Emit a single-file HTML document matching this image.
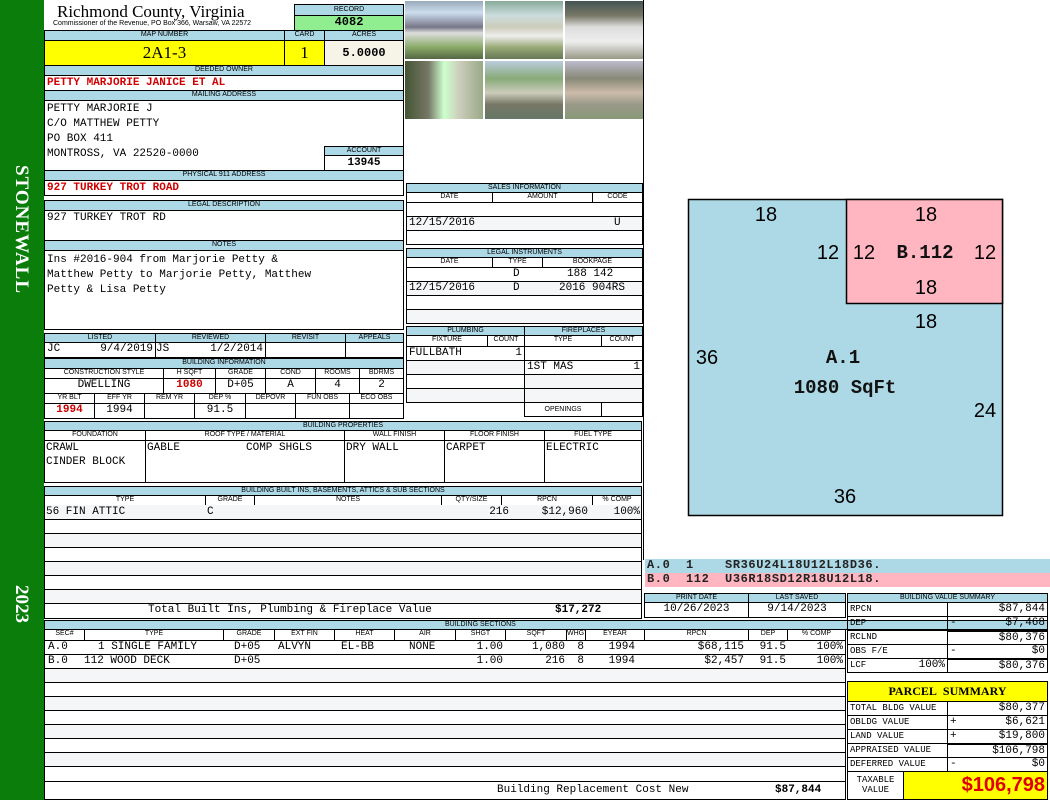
<!DOCTYPE html>
<html><head><meta charset="utf-8"><style>
*{margin:0;padding:0;box-sizing:border-box}
body{width:1050px;height:800px;position:relative;background:#fff;overflow:hidden;font-family:"Liberation Mono",monospace;font-size:11px;color:#000}
div{position:absolute}
.b{border:1px solid #000;overflow:hidden;white-space:nowrap}
.h{background:#add8e6;font:7px/8px "Liberation Sans",sans-serif;text-align:center;border:1px solid #000;white-space:nowrap;overflow:hidden}
.v{line-height:13px;padding:0 2px;white-space:nowrap;overflow:hidden}
.r{text-align:right}.c{text-align:center}
.red{color:#d00000;font-weight:bold}
.ph{border:1px solid #fff}
.sm{font-size:9px}
</style></head><body>
<div style="left:0;top:0;width:44px;height:800px;background:#0b7d0b"></div>
<div style="left:22px;top:165px;width:0;height:0"><div style="transform:rotate(90deg);transform-origin:0 0;left:10px;top:0;color:#fff;font:bold 19px 'Liberation Serif',serif;white-space:nowrap;letter-spacing:1px">STONEWALL</div></div>
<div style="left:22px;top:585px"><div style="transform:rotate(90deg);transform-origin:0 0;left:10px;top:0;color:#fff;font:bold 19px 'Liberation Serif',serif;white-space:nowrap">2023</div></div>

<div style="left:57px;top:2px;font:17px 'Liberation Serif',serif">Richmond County, Virginia</div>
<div style="left:53px;top:20px;font:7px 'Liberation Sans',sans-serif">Commissioner of the Revenue, PO Box 366, Warsaw, VA 22572</div>
<div class="h" style="left:294px;top:4px;width:110px;height:12px;line-height:10px">RECORD</div>
<div class="b c" style="left:294px;top:15px;width:110px;height:16px;background:#90ee90;font-weight:bold;font-size:12px;line-height:13px">4082</div>
<div class="h" style="left:44px;top:30px;width:241px;height:11px">MAP NUMBER</div>
<div class="h" style="left:284px;top:30px;width:41px;height:11px">CARD</div>
<div class="h" style="left:324px;top:30px;width:80px;height:11px">ACRES</div>
<div class="b c" style="left:44px;top:40px;width:241px;height:26px;background:#ffff00;font:17px/24px 'Liberation Serif',serif">2A1-3</div>
<div class="b c" style="left:284px;top:40px;width:41px;height:26px;background:#ffff00;font:17px/24px 'Liberation Serif',serif">1</div>
<div class="b c" style="left:324px;top:40px;width:80px;height:26px;background:#f6f4e6;font-weight:bold;font-size:12px;line-height:24px">5.0000</div>
<div class="h" style="left:44px;top:65px;width:360px;height:11px">DEEDED OWNER</div>
<div class="b v red" style="left:44px;top:75px;width:360px;height:16px;line-height:15px">PETTY MARJORIE JANICE ET AL</div>
<div class="h" style="left:44px;top:90px;width:360px;height:11px">MAILING ADDRESS</div>
<div class="b v" style="left:44px;top:100px;width:360px;height:71px;line-height:15px;padding-top:1px">PETTY MARJORIE J<br>C/O MATTHEW PETTY<br>PO BOX 411<br>MONTROSS, VA 22520-0000</div>
<div class="h" style="left:324px;top:146px;width:80px;height:10px">ACCOUNT</div>
<div class="b c" style="left:324px;top:155px;width:80px;height:16px;font-weight:bold;line-height:14px">13945</div>
<div class="h" style="left:44px;top:170px;width:360px;height:11px">PHYSICAL 911 ADDRESS</div>
<div class="b v red" style="left:44px;top:180px;width:360px;height:16px;line-height:15px">927 TURKEY TROT ROAD</div>
<div class="h" style="left:44px;top:200px;width:360px;height:11px">LEGAL DESCRIPTION</div>
<div class="b v" style="left:44px;top:210px;width:360px;height:31px;line-height:15px">927 TURKEY TROT RD</div>
<div class="h" style="left:44px;top:240px;width:360px;height:11px">NOTES</div>
<div class="b v" style="left:44px;top:250px;width:360px;height:80px;line-height:15px;padding-top:2px;white-space:normal">Ins #2016-904 from Marjorie Petty &amp;<br>Matthew Petty to Marjorie Petty, Matthew<br>Petty &amp; Lisa Petty</div>

<div class="h" style="left:44px;top:333px;width:112px;height:10px">LISTED</div>
<div class="h" style="left:155px;top:333px;width:111px;height:10px">REVIEWED</div>
<div class="h" style="left:265px;top:333px;width:81px;height:10px">REVISIT</div>
<div class="h" style="left:345px;top:333px;width:59px;height:10px">APPEALS</div>
<div class="b v" style="left:44px;top:342px;width:112px;height:16px">JC<span style="float:right">9/4/2019</span></div>
<div class="b v" style="left:155px;top:342px;width:111px;height:16px;padding-left:0">JS<span style="float:right">1/2/2014</span></div>
<div class="b" style="left:265px;top:342px;width:81px;height:16px"></div>
<div class="b" style="left:345px;top:342px;width:59px;height:16px"></div>
<div class="h" style="left:44px;top:358px;width:360px;height:11px">BUILDING INFORMATION</div>
<div class="h" style="left:44px;top:368px;width:120px;height:11px;background:#fff">CONSTRUCTION STYLE</div>
<div class="h" style="left:163px;top:368px;width:53px;height:11px;background:#fff">H SQFT</div>
<div class="h" style="left:215px;top:368px;width:51px;height:11px;background:#fff">GRADE</div>
<div class="h" style="left:265px;top:368px;width:51px;height:11px;background:#fff">COND</div>
<div class="h" style="left:315px;top:368px;width:45px;height:11px;background:#fff">ROOMS</div>
<div class="h" style="left:359px;top:368px;width:45px;height:11px;background:#fff">BDRMS</div>
<div class="b v c" style="left:44px;top:378px;width:120px;height:16px">DWELLING</div>
<div class="b v c red" style="left:163px;top:378px;width:53px;height:16px">1080</div>
<div class="b v c" style="left:215px;top:378px;width:51px;height:16px">D+05</div>
<div class="b v c" style="left:265px;top:378px;width:51px;height:16px">A</div>
<div class="b v c" style="left:315px;top:378px;width:45px;height:16px">4</div>
<div class="b v c" style="left:359px;top:378px;width:45px;height:16px">2</div>
<div class="h" style="left:44px;top:393px;width:51px;height:11px;background:#fff">YR BLT</div>
<div class="h" style="left:94px;top:393px;width:51px;height:11px;background:#fff">EFF YR</div>
<div class="h" style="left:144px;top:393px;width:51px;height:11px;background:#fff">REM YR</div>
<div class="h" style="left:194px;top:393px;width:52px;height:11px;background:#fff">DEP %</div>
<div class="h" style="left:245px;top:393px;width:51px;height:11px;background:#fff">DEPOVR</div>
<div class="h" style="left:295px;top:393px;width:55px;height:11px;background:#fff">FUN OBS</div>
<div class="h" style="left:349px;top:393px;width:55px;height:11px;background:#fff">ECO OBS</div>
<div class="b v c red" style="left:44px;top:403px;width:51px;height:16px">1994</div>
<div class="b v c" style="left:94px;top:403px;width:51px;height:16px">1994</div>
<div class="b" style="left:144px;top:403px;width:51px;height:16px"></div>
<div class="b v c" style="left:194px;top:403px;width:52px;height:16px">91.5</div>
<div class="b" style="left:245px;top:403px;width:51px;height:16px"></div>
<div class="b" style="left:295px;top:403px;width:55px;height:16px"></div>
<div class="b" style="left:349px;top:403px;width:55px;height:16px"></div>

<div class="h" style="left:44px;top:421px;width:598px;height:10px">BUILDING PROPERTIES</div>
<div class="h" style="left:44px;top:430px;width:102px;height:11px;background:#fff">FOUNDATION</div>
<div class="h" style="left:145px;top:430px;width:200px;height:11px;background:#fff">ROOF TYPE / MATERIAL</div>
<div class="h" style="left:344px;top:430px;width:101px;height:11px;background:#fff">WALL FINISH</div>
<div class="h" style="left:444px;top:430px;width:101px;height:11px;background:#fff">FLOOR FINISH</div>
<div class="h" style="left:544px;top:430px;width:98px;height:11px;background:#fff">FUEL TYPE</div>
<div class="b v" style="left:44px;top:440px;width:102px;height:43px;line-height:14px;padding-left:1px">CRAWL<br>CINDER BLOCK</div>
<div class="b v" style="left:145px;top:440px;width:200px;height:43px;line-height:14px;padding-left:1px">GABLE<span style="position:absolute;left:100px">COMP SHGLS</span></div>
<div class="b v" style="left:344px;top:440px;width:101px;height:43px;line-height:14px;padding-left:1px">DRY WALL</div>
<div class="b v" style="left:444px;top:440px;width:101px;height:43px;line-height:14px;padding-left:1px">CARPET</div>
<div class="b v" style="left:544px;top:440px;width:98px;height:43px;line-height:14px;padding-left:1px">ELECTRIC</div>

<div class="h" style="left:44px;top:486px;width:598px;height:10px">BUILDING BUILT INS, BASEMENTS, ATTICS &amp; SUB SECTIONS</div>
<div class="h" style="left:44px;top:495px;width:162px;height:11px;background:#fff">TYPE</div>
<div class="h" style="left:205px;top:495px;width:50px;height:11px;background:#fff">GRADE</div>
<div class="h" style="left:254px;top:495px;width:188px;height:11px;background:#fff">NOTES</div>
<div class="h" style="left:441px;top:495px;width:61px;height:11px;background:#fff">QTY/SIZE</div>
<div class="h" style="left:501px;top:495px;width:92px;height:11px;background:#fff">RPCN</div>
<div class="h" style="left:592px;top:495px;width:50px;height:11px;background:#fff">% COMP</div>
<div class="b" style="left:44px;top:505px;width:598px;height:15px;border-top:0;background:#f4f6f8"></div>
<div class="v" style="left:44px;top:506px">56 FIN ATTIC</div>
<div class="v" style="left:205px;top:506px">C</div>
<div class="v r" style="left:441px;top:506px;width:70px">216</div>
<div class="v r" style="left:501px;top:506px;width:89px">$12,960</div>
<div class="v r" style="left:592px;top:506px;width:50px">100%</div>
<div class="b" style="left:44px;top:519px;width:598px;height:15px"></div>
<div class="b" style="left:44px;top:533px;width:598px;height:15px;background:#f4f6f8"></div>
<div class="b" style="left:44px;top:547px;width:598px;height:15px"></div>
<div class="b" style="left:44px;top:561px;width:598px;height:15px;background:#f4f6f8"></div>
<div class="b" style="left:44px;top:575px;width:598px;height:15px"></div>
<div class="b" style="left:44px;top:589px;width:598px;height:15px;background:#f4f6f8"></div>
<div class="b" style="left:44px;top:603px;width:598px;height:16px"></div>
<div class="v" style="left:146px;top:604px">Total Built Ins, Plumbing &amp; Fireplace Value</div>
<div class="v" style="left:553px;top:604px;font-weight:bold">$17,272</div>

<div class="ph" style="left:404px;top:0;width:80px;height:60px;background:linear-gradient(#9ab 0,#cde 20%,#778 45%,#ddd 55%,#8a6 80%,#564 100%)"></div>
<div class="ph" style="left:484px;top:0;width:80px;height:60px;background:linear-gradient(#8a9 0,#cdd 25%,#ccb 45%,#eee 60%,#9a7 80%,#675 100%)"></div>
<div class="ph" style="left:564px;top:0;width:80px;height:60px;background:linear-gradient(#455 0,#776 25%,#ddd 45%,#eee 70%,#998 100%)"></div>
<div class="ph" style="left:404px;top:60px;width:80px;height:60px;background:linear-gradient(90deg,#453 0,#776 30%,#cfc 50%,#ccb 70%,#9a8 100%)"></div>
<div class="ph" style="left:484px;top:60px;width:80px;height:60px;background:linear-gradient(#bcd 0,#8a7 30%,#ccb 55%,#776 75%,#676 100%)"></div>
<div class="ph" style="left:564px;top:60px;width:80px;height:60px;background:linear-gradient(#bbc 0,#887 30%,#cba 55%,#998 75%,#897 100%)"></div>
<div style="left:643px;top:0;width:1px;height:560px;background:#000"></div>

<div class="h" style="left:406px;top:183px;width:237px;height:10px">SALES INFORMATION</div>
<div class="h" style="left:406px;top:192px;width:87px;height:11px;background:#fff">DATE</div>
<div class="h" style="left:492px;top:192px;width:101px;height:11px;background:#fff">AMOUNT</div>
<div class="h" style="left:592px;top:192px;width:51px;height:11px;background:#fff">CODE</div>
<div class="b" style="left:406px;top:202px;width:237px;height:15px"></div>
<div class="b v" style="left:406px;top:216px;width:237px;height:15px;background:#f4f6f8">12/15/2016<span style="position:absolute;left:207px">U</span></div>
<div class="b" style="left:406px;top:230px;width:237px;height:15px"></div>
<div class="h" style="left:406px;top:248px;width:237px;height:10px">LEGAL INSTRUMENTS</div>
<div class="h" style="left:406px;top:257px;width:87px;height:11px;background:#fff">DATE</div>
<div class="h" style="left:492px;top:257px;width:51px;height:11px;background:#fff">TYPE</div>
<div class="h" style="left:542px;top:257px;width:101px;height:11px;background:#fff">BOOKPAGE</div>
<div class="b v" style="left:406px;top:267px;width:237px;height:15px"><span style="position:absolute;left:106px">D</span><span style="position:absolute;left:160px">188 142</span></div>
<div class="b v" style="left:406px;top:281px;width:237px;height:15px;background:#f4f6f8">12/15/2016<span style="position:absolute;left:106px">D</span><span style="position:absolute;left:152px">2016 904RS</span></div>
<div class="b" style="left:406px;top:295px;width:237px;height:15px"></div>
<div class="b" style="left:406px;top:309px;width:237px;height:15px;background:#f4f6f8"></div>

<div class="h" style="left:406px;top:326px;width:119px;height:10px">PLUMBING</div>
<div class="h" style="left:524px;top:326px;width:119px;height:10px">FIREPLACES</div>
<div class="h" style="left:406px;top:335px;width:82px;height:12px;background:#fff">FIXTURE</div>
<div class="h" style="left:487px;top:335px;width:38px;height:12px;background:#fff">COUNT</div>
<div class="h" style="left:524px;top:335px;width:78px;height:12px;background:#fff">TYPE</div>
<div class="h" style="left:601px;top:335px;width:42px;height:12px;background:#fff">COUNT</div>
<div class="b v" style="left:406px;top:346px;width:119px;height:15px">FULLBATH<span style="float:right">1</span></div>
<div class="b" style="left:406px;top:360px;width:119px;height:15px;background:#f4f6f8"></div>
<div class="b" style="left:406px;top:374px;width:119px;height:15px"></div>
<div class="b" style="left:406px;top:388px;width:119px;height:15px;background:#f4f6f8"></div>
<div class="b" style="left:524px;top:346px;width:119px;height:15px"></div>
<div class="b v" style="left:524px;top:360px;width:119px;height:15px">1ST MAS<span style="float:right">1</span></div>
<div class="b" style="left:524px;top:374px;width:119px;height:15px;background:#f4f6f8"></div>
<div class="b" style="left:524px;top:388px;width:119px;height:15px;background:#f4f6f8"></div>
<div class="h" style="left:524px;top:402px;width:78px;height:15px;background:#fff;line-height:13px">OPENINGS</div>
<div class="b" style="left:601px;top:402px;width:42px;height:15px"></div>

<svg style="position:absolute;left:680px;top:190px" width="340" height="335">
<rect x="8.5" y="9.5" width="314" height="316" fill="#add8e6" stroke="#000" stroke-width="1.5"/>
<rect x="166.5" y="9.5" width="156" height="104" fill="#ffb6c1" stroke="#000" stroke-width="1.5"/>
<g font-family="Liberation Sans,sans-serif" font-size="20" text-anchor="middle">
<text x="86" y="31">18</text><text x="246" y="31">18</text>
<text x="148" y="69">12</text><text x="184" y="69">12</text><text x="305" y="69">12</text>
<text x="246" y="104">18</text><text x="246" y="138">18</text>
<text x="27" y="174">36</text><text x="305" y="227">24</text><text x="165" y="313">36</text>
</g>
<g font-family="Liberation Mono,monospace" font-size="19" font-weight="bold" text-anchor="middle" fill="#111">
<text x="245" y="68">B.112</text><text x="163" y="173">A.1</text><text x="165" y="203">1080 SqFt</text>
</g>
</svg>

<div class="v" style="left:645px;top:559px;width:405px;height:14px;background:#add8e6;font-size:12px;letter-spacing:0.6px;font-weight:bold;color:#222">A.0&nbsp;&nbsp;1&nbsp;&nbsp;&nbsp;&nbsp;SR36U24L18U12L18D36.</div>
<div class="v" style="left:645px;top:573px;width:405px;height:14px;background:#ffb6c1;font-size:12px;letter-spacing:0.6px;font-weight:bold;color:#222">B.0&nbsp;&nbsp;112&nbsp;&nbsp;U36R18SD12R18U12L18.</div>

<div class="h" style="left:644px;top:593px;width:105px;height:10px">PRINT DATE</div>
<div class="h" style="left:748px;top:593px;width:98px;height:10px">LAST SAVED</div>
<div class="b v c" style="left:644px;top:602px;width:105px;height:16px">10/26/2023</div>
<div class="b v c" style="left:748px;top:602px;width:98px;height:16px">9/14/2023</div>

<div class="h" style="left:44px;top:620px;width:1004px;height:10px;text-align:left;padding-left:400px">BUILDING SECTIONS</div>
<div class="h" style="left:44px;top:629px;width:41px;height:12px;background:#fff">SEC#</div>
<div class="h" style="left:84px;top:629px;width:140px;height:12px;background:#fff">TYPE</div>
<div class="h" style="left:223px;top:629px;width:52px;height:12px;background:#fff">GRADE</div>
<div class="h" style="left:274px;top:629px;width:61px;height:12px;background:#fff">EXT FIN</div>
<div class="h" style="left:334px;top:629px;width:61px;height:12px;background:#fff">HEAT</div>
<div class="h" style="left:394px;top:629px;width:62px;height:12px;background:#fff">AIR</div>
<div class="h" style="left:455px;top:629px;width:51px;height:12px;background:#fff">SHGT</div>
<div class="h" style="left:505px;top:629px;width:62px;height:12px;background:#fff">SQFT</div>
<div class="h" style="left:566px;top:629px;width:20px;height:12px;background:#fff">WHGT</div>
<div class="h" style="left:585px;top:629px;width:60px;height:12px;background:#fff">EYEAR</div>
<div class="h" style="left:644px;top:629px;width:105px;height:12px;background:#fff">RPCN</div>
<div class="h" style="left:748px;top:629px;width:40px;height:12px;background:#fff">DEP</div>
<div class="h" style="left:787px;top:629px;width:59px;height:12px;background:#fff">% COMP</div>
<div class="b" style="left:44px;top:640px;width:802px;height:15px"></div>
<div class="b" style="left:44px;top:654px;width:802px;height:15px"></div>
<div class="b" style="left:44px;top:668px;width:802px;height:15px;background:#f4f6f8"></div>
<div class="b" style="left:44px;top:682px;width:802px;height:15px"></div>
<div class="b" style="left:44px;top:696px;width:802px;height:15px;background:#f4f6f8"></div>
<div class="b" style="left:44px;top:710px;width:802px;height:15px"></div>
<div class="b" style="left:44px;top:724px;width:802px;height:15px;background:#f4f6f8"></div>
<div class="b" style="left:44px;top:738px;width:802px;height:15px"></div>
<div class="b" style="left:44px;top:752px;width:802px;height:15px;background:#f4f6f8"></div>
<div class="b" style="left:44px;top:766px;width:802px;height:16px"></div>
<div class="b" style="left:44px;top:781px;width:802px;height:19px"></div>
<div class="v" style="left:46px;top:641px">A.0</div>
<div class="v" style="left:96px;top:641px">1 SINGLE FAMILY</div>
<div class="v" style="left:232px;top:641px">D+05</div>
<div class="v" style="left:276px;top:641px">ALVYN</div>
<div class="v" style="left:339px;top:641px">EL-BB</div>
<div class="v" style="left:407px;top:641px">NONE</div>
<div class="v r" style="left:455px;top:641px;width:50px">1.00</div>
<div class="v r" style="left:505px;top:641px;width:62px">1,080</div>
<div class="v r" style="left:566px;top:641px;width:20px">8</div>
<div class="v r" style="left:585px;top:641px;width:52px">1994</div>
<div class="v r" style="left:644px;top:641px;width:102px">$68,115</div>
<div class="v r" style="left:748px;top:641px;width:40px">91.5</div>
<div class="v r" style="left:787px;top:641px;width:58px">100%</div>
<div class="v" style="left:46px;top:655px">B.0</div>
<div class="v" style="left:82px;top:655px">112 WOOD DECK</div>
<div class="v" style="left:232px;top:655px">D+05</div>
<div class="v r" style="left:455px;top:655px;width:50px">1.00</div>
<div class="v r" style="left:505px;top:655px;width:62px">216</div>
<div class="v r" style="left:566px;top:655px;width:20px">8</div>
<div class="v r" style="left:585px;top:655px;width:52px">1994</div>
<div class="v r" style="left:644px;top:655px;width:102px">$2,457</div>
<div class="v r" style="left:748px;top:655px;width:40px">91.5</div>
<div class="v r" style="left:787px;top:655px;width:58px">100%</div>
<div class="v" style="left:495px;top:784px">Building Replacement Cost New</div>
<div class="v" style="left:773px;top:784px;font-weight:bold">$87,844</div>

<div class="h" style="left:847px;top:593px;width:201px;height:10px">BUILDING VALUE SUMMARY</div>
<div style="left:847px;top:602px;width:201px;height:72px">
<div class="b v sm" style="left:0;top:0;width:101px;height:15px">RPCN</div><div class="b v r" style="left:100px;top:0;width:101px;height:15px">$87,844</div>
<div class="b v sm" style="left:0;top:14px;width:101px;height:15px">DEP</div><div class="b v r" style="left:100px;top:14px;width:101px;height:15px"><span style="float:left">-</span>$7,468</div>
<div class="b v sm" style="left:0;top:28px;width:101px;height:15px">RCLND</div><div class="b v r" style="left:100px;top:28px;width:101px;height:15px;border-top:2px solid #000;line-height:12px">$80,376</div>
<div class="b v sm" style="left:0;top:42px;width:101px;height:15px">OBS F/E</div><div class="b v r" style="left:100px;top:42px;width:101px;height:15px"><span style="float:left">-</span>$0</div>
<div class="b v sm" style="left:0;top:56px;width:101px;height:15px">LCF<span style="float:right;font-size:11px">100%</span></div><div class="b v r" style="left:100px;top:56px;width:101px;height:15px;border-top:2px solid #000;line-height:12px">$80,376</div>
</div>

<div class="b c" style="left:847px;top:681px;width:201px;height:21px;background:#ffff00;font:bold 12px/19px 'Liberation Serif',serif">PARCEL&nbsp; SUMMARY</div>
<div style="left:847px;top:701px;width:201px;height:99px">
<div class="b v sm" style="left:0;top:0;width:101px;height:15px">TOTAL BLDG VALUE</div><div class="b v r" style="left:100px;top:0;width:101px;height:15px">$80,377</div>
<div class="b v sm" style="left:0;top:14px;width:101px;height:15px">OBLDG VALUE</div><div class="b v r" style="left:100px;top:14px;width:101px;height:15px"><span style="float:left">+</span>$6,621</div>
<div class="b v sm" style="left:0;top:28px;width:101px;height:15px">LAND VALUE</div><div class="b v r" style="left:100px;top:28px;width:101px;height:15px"><span style="float:left">+</span>$19,800</div>
<div class="b v sm" style="left:0;top:42px;width:101px;height:15px">APPRAISED VALUE</div><div class="b v r" style="left:100px;top:42px;width:101px;height:15px;border-top:2px solid #000;line-height:12px">$106,798</div>
<div class="b v sm" style="left:0;top:56px;width:101px;height:15px">DEFERRED VALUE</div><div class="b v r" style="left:100px;top:56px;width:101px;height:15px"><span style="float:left">-</span>$0</div>
<div class="b c sm" style="left:0;top:70px;width:57px;height:29px;line-height:10px;padding-top:3px">TAXABLE<br>VALUE</div>
<div class="b r" style="left:56px;top:70px;width:145px;height:29px;background:#ffff00;color:#e00000;font:bold 20px/27px 'Liberation Sans',sans-serif;padding-right:2px">$106,798</div>
</div>
</body></html>
